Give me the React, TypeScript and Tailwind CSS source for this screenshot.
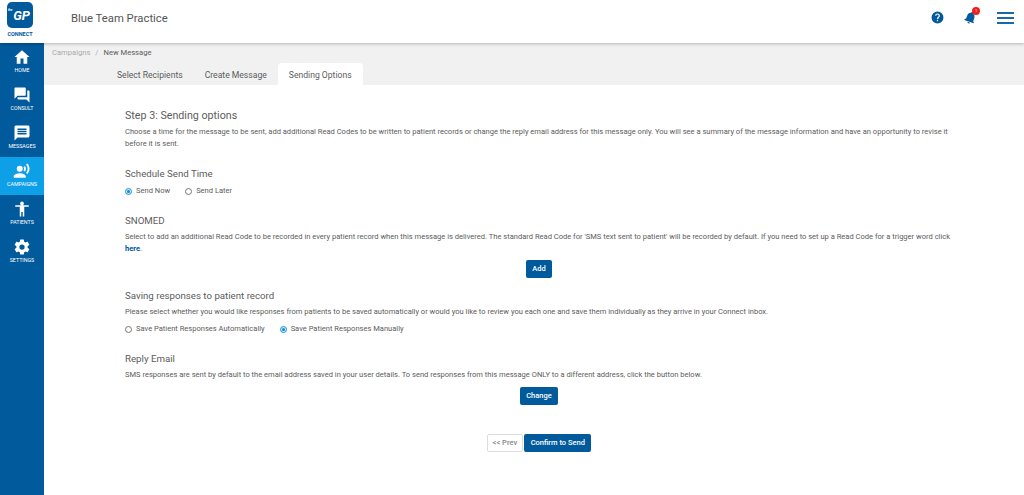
import React from "react";

const Icon = ({ d }: { d: string }) => (
  <svg viewBox="0 0 24 24" className="h-[18px] w-[18px] fill-white"><path d={d} /></svg>
);

const nav = [
  { label: "HOME", d: "M10 21v-7h4v7h5v-9h3L12 3 2 12h3v9z" },
  { label: "CONSULT", d: "M21 6h-2v9H6v2c0 .55.45 1 1 1h11l4 4V7c0-.55-.45-1-1-1zm-4 6V3c0-.55-.45-1-1-1H3c-.55 0-1 .45-1 1v14l4-4h10c.55 0 1-.45 1-1z" },
  { label: "MESSAGES", d: "M20 2H4c-1.1 0-2 .9-2 2v18l4-4h14c1.1 0 2-.9 2-2V4c0-1.1-.9-2-2-2zM6 14v-2h12v2H6zm0-3V9h12v2H6zm0-3V6h12v2H6z" },
  { label: "CAMPAIGNS", active: true, d: "M9 13a4 4 0 1 0 0-8 4 4 0 0 0 0 8zm0 2c-2.7 0-8 1.3-8 4v2h16v-2c0-2.7-5.3-4-8-4zm6.8-9.6-1.7 1.7c.8 1.2.8 2.6 0 3.8l1.7 1.7c2-2 2-5 0-7.2zM19.1 2l-1.6 1.6c2.8 3 2.8 7.5 0 10.8l1.6 1.6c3.9-3.8 3.9-9.800 0-14z" },
  { label: "PATIENTS", d: "M12 2a2.500 2.500 0 1 1 0 5 2.500 2.500 0 0 1 0-5zm9 7h-6v13h-2v-6h-2v6H9V9H3V7h18v2z" },
  { label: "SETTINGS", d: "M19.430 12.980c.04-.32.07-.64.07-.98s-.03-.66-.07-.98l2.110-1.650c.19-.15.24-.42.12-.64l-2-3.460c-.12-.22-.39-.3-.61-.22l-2.490 1c-.52-.4-1.080-.73-1.690-.98l-.38-2.650A.488.488 0 0 0 14 2h-4c-.25 0-.46.18-.49.42l-.38 2.650c-.61.25-1.170.59-1.690.98l-2.490-1c-.23-.09-.49 0-.61.22l-2 3.460c-.13.22-.07.49.12.64l2.110 1.650c-.04.32-.07.65-.07.98s.03.66.07.98l-2.110 1.650c-.19.15-.24.42-.12.64l2 3.460c.12.22.39.3.61.22l2.490-1c.52.4 1.080.73 1.690.98l.38 2.650c.03.24.24.42.49.42h4c.25 0 .46-.18.49-.42l.38-2.650c.61-.25 1.170-.59 1.690-.98l2.490 1c.23.09.49 0 .61-.22l2-3.460c.12-.22.07-.49-.12-.64l-2.110-1.650zM12 15.500a3.500 3.500 0 1 1 0-7 3.500 3.500 0 0 1 0 7z" },
];

const Radio = ({ on, label }: { on?: boolean; label: string }) => (
  <span className="flex items-center gap-[4px]">
    <span className={`flex h-[7px] w-[7px] items-center justify-center rounded-full border ${on ? "border-[#1a9ae0] bg-[#cfe8f7]" : "border-[#777] bg-white"}`}>
      {on && <span className="h-[3px] w-[3px] rounded-full bg-[#1a84c8]" />}
    </span>
    {label}
  </span>
);

const Btn = ({ children }: { children: React.ReactNode }) => (
  <button className="flex h-[18px] items-center rounded-[2px] bg-[#005a9c] px-[6.500px] text-[7.500px] font-medium text-white">{children}</button>
);

export default function App() {
  return (
    <div className="flex h-[495px] w-[1024px] flex-col overflow-hidden bg-white font-['Roboto',sans-serif] text-[7.550px] text-[#5c5c5c]">
      <header className="relative z-10 flex h-[43px] shrink-0 items-start bg-white shadow-[0_1px_3px_rgba(0,0,0,0.25)]">
        <div className="flex w-[40px] shrink-0 flex-col items-center pt-[2px]">
          <div className="flex h-[26px] w-[26px] items-center justify-end gap-[1px] rounded-[5px] bg-[#005a9c] pr-[3px] font-bold italic leading-none text-white">
            <span className="self-start pt-[7px] text-[3px] not-italic">the</span>
            <span className="text-[13px]">GP</span>
          </div>
          <span className="mt-[4px] text-[5.500px] font-bold leading-none text-[#005a9c]">CONNECT</span>
        </div>
        <h1 className="ml-[31px] mt-[12px] text-[11.300px] leading-[14px] text-[#555]">Blue Team Practice</h1>
        <div className="ml-auto mt-[10px] flex items-center">
          <svg viewBox="0 0 24 24" className="h-[13px] w-[13px] fill-[#005a9c]"><path d="M12 1a11 11 0 1 0 0 22 11 11 0 0 0 0-22zm1 18h-2.200v-2.200H13V19zm2.500-7.700-1 1c-.8.8-1.300 1.500-1.300 3h-2.200v-.5c0-1.200.5-2.300 1.300-3.100l1.300-1.400c.4-.4.6-.9.6-1.500a2.200 2.200 0 0 0-4.400 0H7.600a4.400 4.400 0 0 1 8.800 0c0 1-.4 1.900-.9 2.500z" /></svg>
          <span className="relative ml-[19px]">
            <svg viewBox="0 0 24 24" className="h-[15px] w-[15px] rotate-[20deg] fill-[#005a9c]"><path d="M12 22a2 2 0 0 0 2-2h-4a2 2 0 0 0 2 2zm6-6v-5c0-3.100-1.600-5.600-4.500-6.300V4a1.500 1.500 0 0 0-3 0v.7C7.600 5.400 6 7.900 6 11v5l-2 2v1h16v-1l-2-2z" /></svg>
            <span className="absolute right-[-2px] top-[-3px] flex h-[8px] w-[8px] items-center justify-center rounded-full bg-[#f02020] text-[4px] leading-none text-white">1</span>
          </span>
          <div className="ml-[19px] mr-[10px] flex w-[17px] flex-col gap-[3px]">
            <span className="h-[2px] bg-[#1a68a8]" /><span className="h-[2px] bg-[#1a68a8]" /><span className="h-[2px] bg-[#1a68a8]" />
          </div>
        </div>
      </header>
      <div className="flex min-h-0 flex-1">
        <nav className="w-[44px] shrink-0 bg-[#005a9c]">
          {nav.map((n) => (
            <div key={n.label} className={`flex h-[38px] flex-col items-center gap-[2px] pt-[5px] ${n.active ? "bg-[#0ea0e6]" : ""}`}>
              <Icon d={n.d} />
              <span className="text-[5.300px] leading-none text-white">{n.label}</span>
            </div>
          ))}
        </nav>
        <main className="min-w-0 flex-1">
          <div className="h-[42px] bg-[#f1f1f1]">
            <div className="pl-[8px] pt-[5px] text-[7.600px] leading-[10px]">
              <span className="text-[#aaa]">Campaigns</span>
              <span className="mx-[5px] text-[#aaa]">/</span>
              <span>New Message</span>
            </div>
            <div className="mt-[5px] flex pl-[62px] text-[8.600px]">
              <span className="mt-[2px] flex h-[20px] items-center px-[11px]">Select Recipients</span>
              <span className="mt-[2px] flex h-[20px] items-center px-[11px]">Create Message</span>
              <span className="flex h-[22px] items-center rounded-t-[4px] bg-white px-[11px] pt-[2px]">Sending Options</span>
            </div>
          </div>
          <div className="pl-[81px] pr-[71px] leading-[12px]">
            <h2 className="mt-[24px] text-[10.700px] leading-[13px]">Step 3: Sending options</h2>
            <p className="mt-[4px]">Choose a time for the message to be sent, add additional Read Codes to be written to patient records or change the reply email address for this message only. You will see a summary of the message information and have an opportunity to revise it before it is sent.</p>
            <h3 className="mt-[18px] text-[9.700px] leading-[12px]">Schedule Send Time</h3>
            <div className="mt-[5px] flex gap-[15px]"><Radio on label="Send Now" /><Radio label="Send Later" /></div>
            <h3 className="mt-[18px] text-[9.700px] leading-[12px]">SNOMED</h3>
            <p className="mt-[4px]">Select to add an additional Read Code to be recorded in every patient record when this message is delivered. The standard Read Code for 'SMS text sent to patient' will be recorded by default. If you need to set up a Read Code for a trigger word click <a className="font-bold text-[#005a9c]">here</a>.</p>
            <div className="mt-[5px] flex justify-center"><Btn>Add</Btn></div>
            <h3 className="mt-[12px] text-[9.700px] leading-[12px]">Saving responses to patient record</h3>
            <p className="mt-[4px]">Please select whether you would like responses from patients to be saved automatically or would you like to review you each one and save them individually as they arrive in your Connect inbox.</p>
            <div className="mt-[5px] flex gap-[15px]"><Radio label="Save Patient Responses Automatically" /><Radio on label="Save Patient Responses Manually" /></div>
            <h3 className="mt-[18px] text-[9.700px] leading-[12px]">Reply Email</h3>
            <p className="mt-[4px]">SMS responses are sent by default to the email address saved in your user details. To send responses from this message ONLY to a different address, click the button below.</p>
            <div className="mt-[6px] flex justify-center"><Btn>Change</Btn></div>
            <div className="mt-[29px] flex justify-center gap-[1px]">
              <button className="flex h-[18px] items-center rounded-[2px] border border-[#ddd] bg-white px-[5px] text-[7.500px] font-medium text-[#888]">&lt;&lt; Prev</button>
              <Btn>Confirm to Send</Btn>
            </div>
          </div>
        </main>
      </div>
    </div>
  );
}
